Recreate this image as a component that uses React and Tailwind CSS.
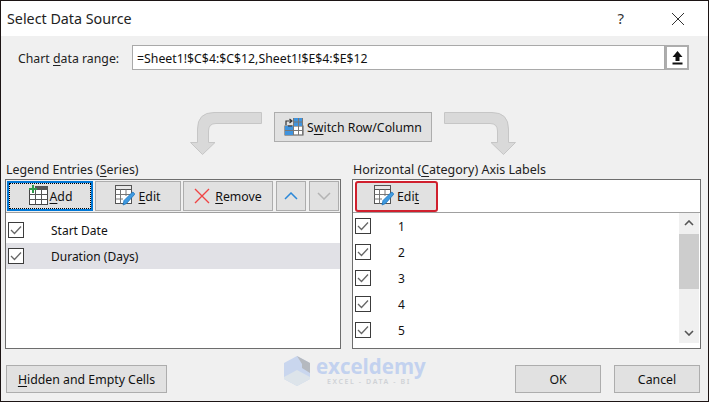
import React from 'react';

const TableAddIcon = () => (
  <svg width="21" height="21" viewBox="0 0 21 21" className="shrink-0 -mt-[1px]">
    <rect x="1.5" y="4.5" width="18" height="15" fill="#fff" stroke="#444" />
    <rect x="7" y="1" width="13" height="4" fill="#555" />
    <path d="M1.5 9.5H19.5M1.5 14.5H19.5M7.5 4.5V19.5M13.5 4.5V19.5" stroke="#555" fill="none" />
    <path d="M5 0V8M1 4H9" stroke="#2e9a4a" strokeWidth="2" fill="none" />
  </svg>
);

const TableEditIcon = () => (
  <svg width="21" height="21" viewBox="0 0 21 21" className="shrink-0 -mt-[1px]">
    <rect x="0.5" y="0.5" width="16" height="18" fill="#fff" stroke="#555" />
    <rect x="0.5" y="0.5" width="16" height="4" fill="#e8e8e8" stroke="#555" />
    <path d="M0.5 9.5H16.5M0.5 14H8M5.5 4.5V18.5M11 4.5V11" stroke="#777" fill="none" />
    <path d="M8 20L9 15.5L17 7.5C18 6.5 20 8.5 19.5 9.5L11.5 18.5Z" fill="#3f9ae0" stroke="#1c75bc" strokeWidth="0.8" />
  </svg>
);

const SwitchIcon = () => (
  <svg width="20" height="19" viewBox="0 0 20 19" className="shrink-0 -mt-[1px]">
    <rect x="1" y="9" width="18" height="9" fill="#fff" stroke="#555" />
    <rect x="9" y="1" width="10" height="8" fill="#3f93dd" />
    <rect x="1" y="9" width="8" height="9" fill="#3f93dd" />
    <path d="M9.5 1V18M14.5 1V18M1 13.5H19M9 5H19M18.5 1V18" stroke="#777" fill="none" />
    <path d="M2 8V4H7M5.5 2L8 4L5.5 6M8 9L4 9" stroke="#333" strokeWidth="1.2" fill="none" />
  </svg>
);

const Check = () => (
  <span className="w-4 h-4 border border-[#3c3c3c] bg-white flex items-center justify-center shrink-0">
    <svg width="12" height="10" viewBox="0 0 12 10">
      <path d="M1 5L4.5 8.5L11 1.5" stroke="#666" strokeWidth="1.3" fill="none" />
    </svg>
  </span>
);

const CurveArrow = ({ flip }) => (
  <svg width="72" height="44" viewBox="0 0 72 44" className={flip ? 'shrink-0 -scale-x-100' : 'shrink-0'}>
    <path
      d="M71.5 0.5V11.5H26Q18.5 11.5 18.5 19V30.5H25L12.5 42.5L0.5 30.5H7.5V17Q7.5 0.5 24 0.5Z"
      fill="#d9d9d9"
      stroke="#c6c6c6"
    />
  </svg>
);

const Button = ({ className, children }) => (
  <button className={`bg-[#e1e1e1] border border-[#adadad] flex items-center justify-center text-[#111] ${className}`}>
    {children}
  </button>
);

const Label = ({ children }) => <span className="pt-[2px] text-[12.3px]">{children}</span>;

const Row = ({ label, selected, className }) => (
  <div className={`h-[26px] flex items-center ${selected ? 'bg-[#e1e1e6]' : ''} ${className}`}>
    <Check />
    <span className="pt-[2px] text-[12px] text-[#111]">{label}</span>
  </div>
);

const App = () => {
  return (
    <div className="w-[709px] h-[402px] bg-[#f0f0f0] border border-[#1c1414] flex flex-col relative overflow-hidden text-[12px] font-['Noto_Sans','Open_Sans',sans-serif] text-[#222]">
      {/* title bar */}
      <div className="h-[35px] bg-white flex items-center shrink-0">
        <span className="ml-[6px] text-[14.3px] text-[#222]">Select Data Source</span>
        <span className="ml-auto text-[15px] text-[#333] mr-[47px]">?</span>
        <svg width="14" height="14" viewBox="0 0 14 14" className="mr-[23px]">
          <path d="M1 1L13 13M13 1L1 13" stroke="#333" fill="none" />
        </svg>
      </div>

      {/* range */}
      <div className="flex items-center mt-[9px] h-[25px] pl-[17px] pr-[19px]">
        <span className="w-[114px] pt-[3px] text-[12.3px]">Chart <u className="underline-offset-2">d</u>ata range:</span>
        <div className="flex-1 h-full bg-white border border-[#a9a9a9] flex items-center pl-[4px] pt-[3px] text-[12.3px] text-[#111]">
          =Sheet1!$C$4:$C$12,Sheet1!$E$4:$E$12
        </div>
        <div className="w-[24px] h-full border-2 border-[#adadad] bg-white flex items-center justify-center">
          <svg width="11" height="14" viewBox="0 0 11 14">
            <path d="M5.5 0L10.5 6H7.5V10H3.5V6H0.5ZM0.5 11.5H10.5V13.5H0.5Z" fill="#111" />
          </svg>
        </div>
      </div>

      {/* switch row */}
      <div className="flex items-start gap-3 mt-[42px] pl-[189px] h-[44px]">
        <CurveArrow />
        <Button className="w-[158px] h-[30px] gap-[3px]">
          <SwitchIcon />
          <Label>S<u className="underline-offset-2">w</u>itch Row/Column</Label>
        </Button>
        <CurveArrow flip />
      </div>

      {/* panels */}
      <div className="flex gap-[11px] pl-[4px] pr-[7px] mt-[5px]">
        <div className="w-[336px] shrink-0">
          <div className="h-[18px] pl-[1px] leading-[18px] text-[12.4px]">Legend Entries (<u className="underline-offset-2">S</u>eries)</div>
          <div className="h-[170px] bg-white border border-[#6d6d6d]">
            <div className="h-[33px] border-b border-[#a0a0a0] bg-[#f0f0f0] flex items-center pl-[1px] gap-[2px]">
              <Button className="w-[86px] h-[30px] !border-2 !border-[#0078d7] outline-1 outline-dotted outline-black -outline-offset-3 gap-[1px]">
                <TableAddIcon />
                <Label><u className="underline-offset-2">A</u>dd</Label>
              </Button>
              <Button className="w-[86px] h-[30px] gap-[2px]">
                <TableEditIcon />
                <Label><u className="underline-offset-2">E</u>dit</Label>
              </Button>
              <Button className="w-[90px] h-[30px] gap-[5px]">
                <svg width="16" height="16" viewBox="0 0 16 16">
                  <path d="M1 1L15 15M15 1L1 15" stroke="#ef4444" strokeWidth="1.4" fill="none" />
                </svg>
                <Label><u className="underline-offset-2">R</u>emove</Label>
              </Button>
              <Button className="w-[30px] h-[30px] ml-[1px]">
                <svg width="14" height="8" viewBox="0 0 14 8">
                  <path d="M1 7L7 1L13 7" stroke="#2b88d8" strokeWidth="1.5" fill="none" />
                </svg>
              </Button>
              <Button className="w-[30px] h-[30px] ml-[1px]">
                <svg width="14" height="8" viewBox="0 0 14 8">
                  <path d="M1 1L7 7L13 1" stroke="#b4b4b4" strokeWidth="1.5" fill="none" />
                </svg>
              </Button>
            </div>
            <div className="pt-[4px]">
              <Row label="Start Date" className="pl-[2px] gap-[27px]" />
              <Row label="Duration (Days)" selected className="pl-[2px] gap-[27px]" />
            </div>
          </div>
        </div>

        <div className="flex-1">
          <div className="h-[18px] pl-[1px] leading-[18px] text-[12.5px]">Horizontal (<u className="underline-offset-2">C</u>ategory) Axis Labels</div>
          <div className="h-[170px] bg-white border border-[#6d6d6d]">
            <div className="h-[33px] border-b border-[#a0a0a0] flex items-center pl-[2px]">
              <Button className="w-[83px] h-[31px] !border-2 !border-[#d0202e] rounded-[3px] gap-[2px]">
                <TableEditIcon />
                <Label>Edi<u className="underline-offset-2">t</u></Label>
              </Button>
            </div>
            <div className="flex h-[135px]">
              <div className="flex-1">
                {['1', '2', '3', '4', '5'].map((n) => (
                  <Row key={n} label={n} className="pl-[2px] gap-[27px]" />
                ))}
              </div>
              <div className="w-[20px] mr-[1px] h-[130px] bg-[#f0f0f0] flex flex-col items-center justify-between py-[7px] relative">
                <svg width="10" height="6" viewBox="0 0 10 6">
                  <path d="M1 5L5 1L9 5" stroke="#555" strokeWidth="1.6" fill="none" />
                </svg>
                <div className="absolute left-0 right-0 top-[21px] h-[55px] bg-[#cdcdcd]"></div>
                <svg width="10" height="6" viewBox="0 0 10 6">
                  <path d="M1 1L5 5L9 1" stroke="#555" strokeWidth="1.6" fill="none" />
                </svg>
              </div>
            </div>
          </div>
        </div>
      </div>

      {/* bottom buttons */}
      <div className="flex items-center mt-[16px] pl-[5px] pr-[8px]">
        <Button className="w-[161px] h-[28px]">
          <Label><u className="underline-offset-2">H</u>idden and Empty Cells</Label>
        </Button>
        <Button className="w-[86px] h-[28px] ml-auto"><Label>OK</Label></Button>
        <Button className="w-[86px] h-[28px] ml-[13px]"><Label>Cancel</Label></Button>
      </div>

      {/* watermark */}
      <div className="absolute left-[282px] top-[354px] w-[143px] h-[32px] flex items-center gap-[5px] bg-[#f0f0f0]/60">
        <svg width="28" height="32" viewBox="0 0 28 32" className="shrink-0">
          <path d="M14 1L27 8V24L14 31L1 24V8Z" fill="#c9d6ee" />
          <path d="M14 1L27 8V18L19 13V9Z" fill="#b5b9bf" />
          <path d="M1 22L14 15L27 22V24L14 31L1 24Z" fill="#dde4ea" />
        </svg>
        <div className="flex flex-col">
          <span className="text-[20.5px] font-bold text-[#c3d2ef] font-['Open_Sans',sans-serif] leading-[21px]">exceldemy</span>
          <span className="ml-[11px] text-[7px] font-semibold tracking-[1.6px] text-[#cfd2d6] leading-[9px]">EXCEL - DATA - BI</span>
        </div>
      </div>
    </div>
  );
};

export default App;
